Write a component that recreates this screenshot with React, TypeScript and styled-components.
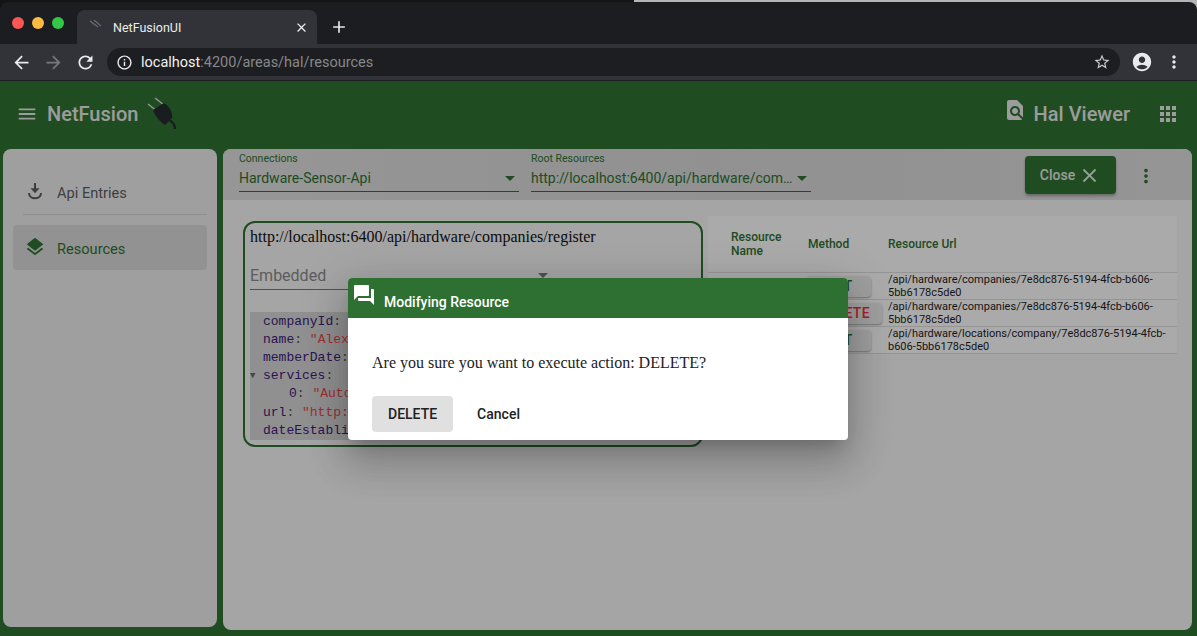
import React from "react";
import styled, { createGlobalStyle } from "styled-components";
import {
  MdAccountCircle,
  MdAdd,
  MdApps,
  MdArrowBack,
  MdArrowForward,
  MdClose,
  MdFindInPage,
  MdForum,
  MdInfoOutline,
  MdLayers,
  MdMenu,
  MdMoreVert,
  MdRefresh,
  MdStarBorder,
} from "react-icons/md";

const GREEN = "#2e7031";

const Global = createGlobalStyle`
  html, body {
    margin: 0;
    height: 100%;
    overflow: hidden;
    background: #000;
  }
  #root {
    height: 100%;
  }
  * {
    box-sizing: border-box;
  }
`;

const Page = styled.div`
  height: 636px;
  display: flex;
  flex-direction: column;
  font-family: Roboto, sans-serif;
  background: linear-gradient(90deg, #141414 53%, #b5b5b5 53%);
  padding-top: 2px;
`;

const Browser = styled.div`
  flex: none;
  background: #1c1d20;
  border-radius: 8px 8px 0 0;
`;

const TabStrip = styled.div`
  height: 42px;
  display: flex;
  align-items: flex-end;
  padding-left: 12px;
`;

const Dot = styled.span<{ $color: string }>`
  width: 12px;
  height: 12px;
  border-radius: 50%;
  margin-right: 8px;
  margin-bottom: 15px;
  background: ${(p) => p.$color};
`;

const Tab = styled.div`
  width: 240px;
  height: 34px;
  margin-left: 5px;
  padding: 0 8px 0 12px;
  display: flex;
  align-items: center;
  background: #323338;
  border-radius: 8px 8px 0 0;
  color: #eceded;
  font-size: 12.5px;
`;

const TabTitle = styled.span`
  flex: 1;
  margin-left: 10px;
`;

const Plus = styled.span`
  height: 34px;
  margin-left: 12px;
  display: flex;
  align-items: center;
  color: #e8e8e8;
  font-size: 20px;
`;

const NavBar = styled.div`
  height: 37px;
  display: flex;
  align-items: center;
  padding: 0 13px 0 5px;
  background: #323338;
  border-bottom: 1px solid #1e1f22;
  color: #e8eaed;
`;

const NavButton = styled.span<{ $dim?: boolean }>`
  width: 32px;
  display: flex;
  justify-content: center;
  font-size: 21px;
  color: ${(p) => (p.$dim ? "#77787b" : "#e8eaed")};
`;

const Omnibox = styled.div`
  flex: 1;
  height: 28px;
  margin: 0 11px 0 6px;
  padding: 0 9px 0 9px;
  display: flex;
  align-items: center;
  background: #1d1e21;
  border-radius: 14px;
  font-size: 14.5px;
  color: #87888b;
`;

const Host = styled.span`
  color: #f1f3f4;
  margin-left: 8px;
`;

const UrlRest = styled.span`
  flex: 1;
`;

const AppFrame = styled.div`
  flex: 1;
  min-height: 0;
  position: relative;
  display: flex;
  flex-direction: column;
  background: ${GREEN};
`;

const AppBar = styled.header`
  height: 68px;
  flex: none;
  display: flex;
  align-items: center;
  padding: 0 17px 3px 16px;
  color: #e6e6e6;
`;

const BarIcon = styled.span<{ $raised?: boolean }>`
  display: flex;
  font-size: 22px;
  margin-bottom: ${(p) => (p.$raised ? "7px" : "0")};
`;

const Brand = styled.span`
  margin-left: 9px;
  font-size: 20px;
  font-weight: 500;
`;

const AreaTitle = styled.span`
  margin: 0 26px 0 7px;
  font-size: 20px;
  font-weight: 500;
`;

const Spacer = styled.div`
  flex: 1;
`;

const Workspace = styled.div`
  flex: 1;
  min-height: 0;
  display: flex;
  padding: 0 5px 6px 3px;
  gap: 6px;
`;

const SideNav = styled.nav`
  width: 214px;
  margin-bottom: 3px;
  padding: 20px 10px;
  background: #ebebeb;
  border-radius: 8px;
`;

const NavItem = styled.div<{ $active?: boolean }>`
  height: 45px;
  display: flex;
  align-items: center;
  padding: 2px 0 0 11px;
  gap: 11px;
  font-size: 14.6px;
  border-radius: 4px;
  color: ${(p) => (p.$active ? GREEN : "#5c5c5c")};
  background: ${(p) => (p.$active ? "#d8d8d8" : "transparent")};
`;

const NavIcon = styled.span`
  display: flex;
  width: 22px;
  margin-top: -3px;
  justify-content: center;
  font-size: 22px;
`;

const NavDivider = styled.div`
  height: 1px;
  margin: 0 0 10px 10px;
  background: #d2d2d2;
`;

const Content = styled.main`
  flex: 1;
  display: flex;
  flex-direction: column;
  min-width: 0;
  background: #f3f3f3;
  border-radius: 8px;
  overflow: hidden;
`;

const ContentBar = styled.div`
  height: 51px;
  flex: none;
  display: flex;
  padding: 3px 35px 0 16px;
  gap: 12px;
  background: linear-gradient(90deg, #dedede, #d6d6d6 50%, #dcdcdc);
`;

const Field = styled.div`
  width: 280px;
  color: ${GREEN};
`;

const FieldLabel = styled.div`
  font-size: 10.5px;
  line-height: 13px;
`;

const FieldValue = styled.div`
  height: 27px;
  display: flex;
  align-items: center;
  gap: 3px;
  font-size: 14px;
  border-bottom: 1px solid ${GREEN};
`;

const FieldText = styled.span`
  flex: 1;
  min-width: 0;
  overflow: hidden;
  text-overflow: ellipsis;
  white-space: nowrap;
`;

const Caret = styled.span<{ $color?: string }>`
  width: 0;
  height: 0;
  margin-right: 4px;
  border-left: 5px solid transparent;
  border-right: 5px solid transparent;
  border-top: 5px solid ${(p) => p.$color ?? GREEN};
`;

const CloseButton = styled.button`
  width: 91px;
  height: 38px;
  margin-top: 4px;
  display: flex;
  align-items: center;
  justify-content: center;
  gap: 3px;
  border: 0;
  border-radius: 4px;
  color: #e6e6e6;
  background: ${GREEN};
  font: 500 14px Roboto, sans-serif;
  box-shadow: 0 2px 3px rgba(0, 0, 0, 0.3);
  svg {
    font-size: 23px;
  }
`;

const Kebab = styled.span`
  display: flex;
  margin: 13px 0 0 7px;
  font-size: 22px;
  color: ${GREEN};
`;

const ContentBody = styled.div`
  flex: 1;
  display: flex;
  align-items: flex-start;
  padding: 16px 15px 0 20px;
  gap: 5px;
`;

const ResourceCard = styled.section`
  width: 460px;
  height: 226px;
  margin-top: 5px;
  padding: 5px 5px;
  border: 2px solid ${GREEN};
  border-radius: 12px;
`;

const ResourceUrl = styled.div`
  font: 16px/18px "Liberation Serif", serif;
  color: #111;
`;

const EmbeddedSelect = styled.div`
  height: 29px;
  margin: 15px 144px 0 0;
  display: flex;
  align-items: center;
  justify-content: space-between;
  font-size: 16px;
  color: #8a8a8a;
  border-bottom: 1px solid #777;
`;

const JsonView = styled.div`
  height: 128px;
  margin-top: 22px;
  padding: 1px 0 0 13px;
  background: #d4d4d4;
  font: 13px/18px "Liberation Mono", monospace;
  color: #555;
`;

const JsonRow = styled.div<{ $nested?: boolean; $gap?: boolean }>`
  position: relative;
  padding-left: ${(p) => (p.$nested ? "26px" : "0")};
  margin-top: ${(p) => (p.$gap ? "1px" : "0")};
`;

const JsonKey = styled.span`
  color: #3f2078;
`;

const JsonString = styled.span`
  color: #e8484c;
`;

const Toggle = styled.span`
  position: absolute;
  left: -13px;
  top: 0;
  font-size: 9px;
  color: #666;
`;

const ResourceTable = styled.section`
  flex: 1;
  display: grid;
  grid-template-columns: 99px 81px 1fr;
  background: #fbfbfb;
  font-size: 11px;
  color: #1e1e1e;
`;

const HeadCell = styled.div<{ $inset: number }>`
  height: 57px;
  display: flex;
  align-items: center;
  padding-left: ${(p) => p.$inset}px;
  color: ${GREEN};
  font-size: 12px;
  font-weight: 500;
  line-height: 14px;
  border-bottom: 1px solid #dcdcdc;
`;

const Cell = styled.div`
  height: 27px;
  display: flex;
  align-items: center;
  line-height: 13.5px;
  padding-right: 8px;
  border-bottom: 1px solid #dcdcdc;
`;

const MethodButton = styled.button<{ $danger?: boolean }>`
  height: 21px;
  min-width: 64px;
  flex: none;
  padding: 0 12px;
  border: 0;
  border-radius: 4px;
  background: #eaeaea;
  color: ${(p) => (p.$danger ? "#f0323f" : GREEN)};
  font: 500 14px Roboto, sans-serif;
  letter-spacing: 0.3px;
  box-shadow: 0 1px 2px rgba(0, 0, 0, 0.35);
`;

const Backdrop = styled.div`
  position: absolute;
  inset: 0;
  padding-right: 1px;
  display: flex;
  align-items: center;
  justify-content: center;
  background: rgba(0, 0, 0, 0.32);
`;

const Dialog = styled.div`
  width: 500px;
  height: 162px;
  display: flex;
  flex-direction: column;
  overflow: hidden;
  border-radius: 4px;
  background: #fff;
  box-shadow: 0 11px 15px -7px rgba(0, 0, 0, 0.2),
    0 24px 38px 3px rgba(0, 0, 0, 0.14), 0 9px 46px 8px rgba(0, 0, 0, 0.12);
`;

const DialogHeader = styled.div`
  height: 40px;
  flex: none;
  display: flex;
  padding-left: 4px;
  background: ${GREEN};
  color: #fff;
  svg {
    font-size: 24px;
    margin-top: 5px;
  }
`;

const DialogTitle = styled.span`
  margin: 16px 0 0 8px;
  font-size: 14px;
  line-height: 16px;
  font-weight: 500;
`;

const DialogText = styled.p`
  margin: 35px 24px 0;
  font: 16px/20px "Liberation Serif", serif;
  color: #222;
`;

const DialogActions = styled.div`
  margin: 23px 24px 0;
  display: flex;
  gap: 8px;
`;

const ActionButton = styled.button<{ $filled?: boolean }>`
  height: 36px;
  min-width: 74px;
  padding: 0 16px;
  border: 0;
  border-radius: 4px;
  background: ${(p) => (p.$filled ? "#e0e0e0" : "transparent")};
  color: #212121;
  font: 500 14px Roboto, sans-serif;
`;

const PlugIcon = () => (
  <svg width="34" height="34" viewBox="0 0 34 34" style={{ marginLeft: 8, marginBottom: -1 }}>
    <path d="M2 7 L12 15 M9 1 L18 8" stroke="#dcdcdc" strokeWidth="1.5" />
    <path d="M7 13 L18 6 C23 9 27 15 26 21 L19 28 C14 25 9 19 7 13 Z" fill="#272b2e" />
    <path d="M23 23 C27 25 29 28 29 32" stroke="#272b2e" strokeWidth="2.4" fill="none" />
  </svg>
);

const TabFavicon = () => (
  <svg width="14" height="14" viewBox="0 0 14 14">
    <path d="M1 1 L9 7 M5 0 L12 6" stroke="#6b6c70" strokeWidth="1.2" />
  </svg>
);

const DownloadIcon = () => (
  <svg width="18" height="18" viewBox="0 0 18 18" fill="none" stroke="currentColor">
    <path d="M9 1 V9" strokeWidth="2" />
    <path d="M5 6.5 H13 L9 11 Z" fill="currentColor" strokeWidth="0.5" />
    <path d="M3 11 C3 18 15 18 15 11" strokeWidth="2" />
  </svg>
);

const rows = [
  { method: "GET", url: "/api/hardware/companies/7e8dc876-5194-4fcb-b606-5bb6178c5de0" },
  { method: "DELETE", url: "/api/hardware/companies/7e8dc876-5194-4fcb-b606-5bb6178c5de0" },
  { method: "GET", url: "/api/hardware/locations/company/7e8dc876-5194-4fcb-b606-5bb6178c5de0" },
];

export default function App() {
  return (
    <Page>
      <Global />
      <Browser>
        <TabStrip>
          <Dot $color="#fc5753" />
          <Dot $color="#fdbc40" />
          <Dot $color="#33c748" />
          <Tab>
            <TabFavicon />
            <TabTitle>NetFusionUI</TabTitle>
            <MdClose size={15} />
          </Tab>
          <Plus>
            <MdAdd />
          </Plus>
        </TabStrip>
        <NavBar>
          <NavButton>
            <MdArrowBack />
          </NavButton>
          <NavButton $dim>
            <MdArrowForward />
          </NavButton>
          <NavButton>
            <MdRefresh />
          </NavButton>
          <Omnibox>
            <MdInfoOutline size={17} color="#e8eaed" />
            <Host>localhost</Host>
            <UrlRest>:4200/areas/hal/resources</UrlRest>
            <MdStarBorder size={18} color="#c8c9cb" />
          </Omnibox>
          <MdAccountCircle size={22} />
          <MdMoreVert size={20} style={{ marginLeft: 11 }} />
        </NavBar>
      </Browser>
      <AppFrame>
        <AppBar>
          <BarIcon>
            <MdMenu />
          </BarIcon>
          <Brand>NetFusion</Brand>
          <PlugIcon />
          <Spacer />
          <BarIcon $raised>
            <MdFindInPage size={24} />
          </BarIcon>
          <AreaTitle>Hal Viewer</AreaTitle>
          <BarIcon>
            <MdApps size={24} />
          </BarIcon>
        </AppBar>
        <Workspace>
          <SideNav>
            <NavItem>
              <NavIcon>
                <DownloadIcon />
              </NavIcon>
              Api Entries
            </NavItem>
            <NavDivider />
            <NavItem $active>
              <NavIcon>
                <MdLayers />
              </NavIcon>
              Resources
            </NavItem>
          </SideNav>
          <Content>
            <ContentBar>
              <Field>
                <FieldLabel>Connections</FieldLabel>
                <FieldValue>
                  <FieldText>Hardware-Sensor-Api</FieldText>
                  <Caret />
                </FieldValue>
              </Field>
              <Field>
                <FieldLabel>Root Resources</FieldLabel>
                <FieldValue>
                  <FieldText>http://localhost:6400/api/hardware/companies/register</FieldText>
                  <Caret />
                </FieldValue>
              </Field>
              <Spacer />
              <CloseButton>
                Close <MdClose />
              </CloseButton>
              <Kebab>
                <MdMoreVert />
              </Kebab>
            </ContentBar>
            <ContentBody>
              <ResourceCard>
                <ResourceUrl>http://localhost:6400/api/hardware/companies/register</ResourceUrl>
                <EmbeddedSelect>
                  Embedded
                  <Caret $color="#777" />
                </EmbeddedSelect>
                <JsonView>
                  <JsonRow>
                    <JsonKey>companyId</JsonKey>:
                  </JsonRow>
                  <JsonRow>
                    <JsonKey>name</JsonKey>: <JsonString>"Alex</JsonString>
                  </JsonRow>
                  <JsonRow>
                    <JsonKey>memberDate</JsonKey>:
                  </JsonRow>
                  <JsonRow>
                    <Toggle>▼</Toggle>
                    <JsonKey>services</JsonKey>:
                  </JsonRow>
                  <JsonRow $nested>
                    <JsonKey>0</JsonKey>: <JsonString>"Auto</JsonString>
                  </JsonRow>
                  <JsonRow $gap>
                    <JsonKey>url</JsonKey>: <JsonString>"http:</JsonString>
                  </JsonRow>
                  <JsonRow>
                    <JsonKey>dateEstablished</JsonKey>:
                  </JsonRow>
                </JsonView>
              </ResourceCard>
              <ResourceTable>
                <HeadCell $inset={23}>Resource Name</HeadCell>
                <HeadCell $inset={1}>Method</HeadCell>
                <HeadCell $inset={0}>Resource Url</HeadCell>
                {rows.map((row, i) => (
                  <React.Fragment key={i}>
                    <Cell />
                    <Cell>
                      <MethodButton $danger={row.method === "DELETE"}>{row.method}</MethodButton>
                    </Cell>
                    <Cell>{row.url}</Cell>
                  </React.Fragment>
                ))}
              </ResourceTable>
            </ContentBody>
          </Content>
        </Workspace>
        <Backdrop>
          <Dialog>
            <DialogHeader>
              <MdForum />
              <DialogTitle>Modifying Resource</DialogTitle>
            </DialogHeader>
            <DialogText>Are you sure you want to execute action: DELETE?</DialogText>
            <DialogActions>
              <ActionButton $filled>DELETE</ActionButton>
              <ActionButton>Cancel</ActionButton>
            </DialogActions>
          </Dialog>
        </Backdrop>
      </AppFrame>
    </Page>
  );
}
